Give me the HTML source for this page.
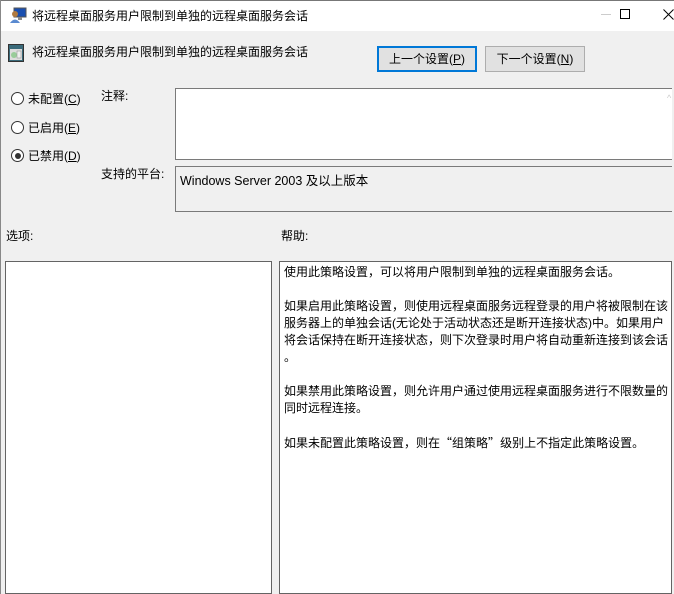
<!DOCTYPE html>
<html><head><meta charset="utf-8"><style>
*{margin:0;padding:0;box-sizing:border-box}
body{width:674px;height:594px;overflow:hidden;background:#f0f0f0;font-family:"Liberation Sans","Noto Sans CJK SC","Microsoft YaHei",sans-serif;font-size:12px;color:#000;position:relative}
.a{position:absolute;white-space:nowrap}
.title{position:absolute;left:0;top:0;width:674px;height:31px;background:#fff;border-top:1px solid #777;border-left:1px solid #888}
.box{position:absolute;border:1px solid #7a7a7a}
.btn{position:absolute;height:26px;text-align:center;line-height:22px;font-size:12px;background:#e1e1e1;border:1px solid #adadad}
.radio{position:absolute;left:11px;width:13px;height:13px;border:1px solid #333;border-radius:50%;background:#fff}
.radio.on::after{content:"";position:absolute;left:2.5px;top:2.5px;width:6px;height:6px;border-radius:50%;background:#333}
u{text-decoration:underline}
.help p{margin:0;line-height:17px;height:17px}
.q{font-family:"Noto Sans CJK SC",sans-serif}
</style></head><body>
<div class="title"></div>
<div style="position:absolute;left:0;top:0;width:1px;height:594px;background:#888"></div>
<svg class="a" style="left:9px;top:6px" width="18" height="18" viewBox="0 0 18 18"><rect x="5" y="2" width="12" height="9" fill="#1a4fb0" stroke="#555"/><rect x="9" y="11" width="4" height="3" fill="#888"/><circle cx="6" cy="8" r="3" fill="#b07a40"/><path d="M1 17 Q6 10 11 17Z" fill="#5a8ad0"/></svg>
<div class="a" style="left:32px;top:7px;font-size:12px">将远程桌面服务用户限制到单独的远程桌面服务会话</div>
<div class="a" style="left:601px;top:14px;width:10px;height:1px;background:#ccc"></div>
<div class="a" style="left:620px;top:9px;width:10px;height:10px;border:1px solid #000"></div>
<svg class="a" style="left:663px;top:9px" width="11" height="11" viewBox="0 0 11 11"><path d="M0.5 0.5L10.5 10.5M10.5 0.5L0.5 10.5" stroke="#000" stroke-width="1"/></svg>
<svg class="a" style="left:8px;top:44px" width="16" height="18" viewBox="0 0 16 18"><rect x="0.5" y="0.5" width="15" height="17" fill="#3a6a7a" stroke="#333"/><rect x="2" y="5" width="12" height="11" fill="#ddd"/><circle cx="6" cy="11" r="3" fill="#9c9"/><rect x="9" y="7" width="4" height="7" fill="#eee" stroke="#888" stroke-width=".5"/></svg>
<div class="a" style="left:32px;top:43px">将远程桌面服务用户限制到单独的远程桌面服务会话</div>
<div class="btn" style="left:377px;top:46px;width:100px;border:2px solid #0078d7">上一个设置(<u>P</u>)</div>
<div class="btn" style="left:485px;top:46px;width:100px;line-height:24px">下一个设置(<u>N</u>)</div>
<div class="radio" style="top:92px"></div><div class="a" style="left:28px;top:90px">未配置(<u>C</u>)</div>
<div class="radio" style="top:121px"></div><div class="a" style="left:28px;top:119px">已启用(<u>E</u>)</div>
<div class="radio on" style="top:149px"></div><div class="a" style="left:28px;top:147px">已禁用(<u>D</u>)</div>
<div class="a" style="left:101px;top:87px">注释:</div>
<div class="box" style="left:175px;top:88px;width:497px;height:72px;background:#fff;border-right:none"></div>
<div class="a" style="left:667px;top:93px;color:#ccc;font-size:9px">^</div>
<div class="a" style="left:101px;top:165px">支持的平台:</div>
<div class="box" style="left:175px;top:166px;width:497px;height:46px;background:#f0f0f0;border-right:none"></div>
<div class="a" style="left:180px;top:170px;font-size:12.5px">Windows Server 2003 及以上版本</div>
<div class="a" style="left:6px;top:227px">选项:</div>
<div class="a" style="left:281px;top:227px">帮助:</div>
<div class="box" style="left:5px;top:261px;width:267px;height:333px;background:#fff;border-color:#646464"></div>
<div class="box help" style="left:279px;top:261px;width:393px;height:333px;background:#fff;border-color:#646464;padding:2px 0 0 4px">
<p>使用此策略设置，可以将用户限制到单独的远程桌面服务会话。</p><p></p>
<p>如果启用此策略设置，则使用远程桌面服务远程登录的用户将被限制在该</p><p>服务器上的单独会话(无论处于活动状态还是断开连接状态)中。如果用户</p><p>将会话保持在断开连接状态，则下次登录时用户将自动重新连接到该会话</p><p>。</p><p></p>
<p>如果禁用此策略设置，则允许用户通过使用远程桌面服务进行不限数量的</p><p>同时远程连接。</p><p></p>
<p>如果未配置此策略设置，则在<span class="q">“</span>组策略<span class="q">”</span>级别上不指定此策略设置。</p>
</div>
</body></html>
